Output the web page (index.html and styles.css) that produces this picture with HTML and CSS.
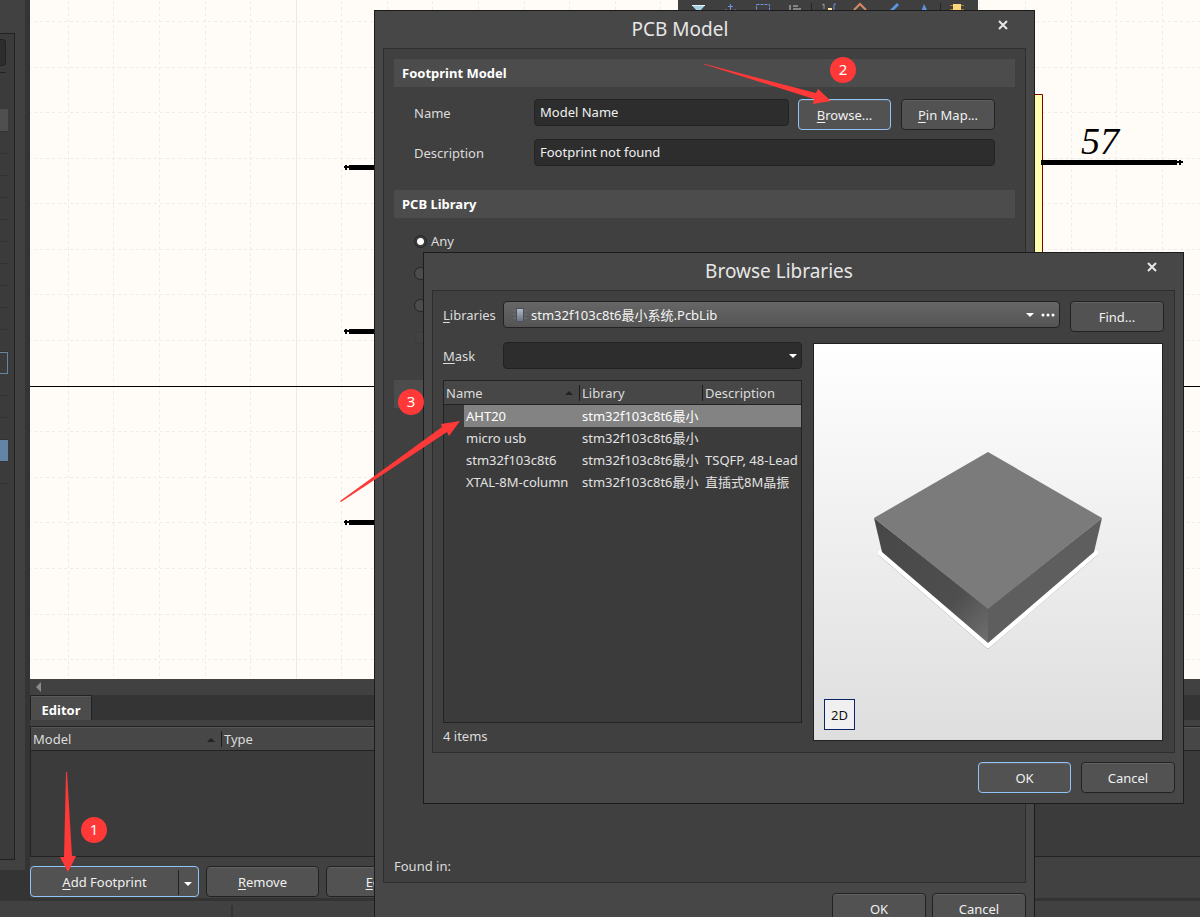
FILE: index.html
```html
<!DOCTYPE html>
<html lang="en">
<head>
<meta charset="utf-8">
<title>PCB Model</title>
<link rel="stylesheet" href="styles.css">
</head>
<body>
<div class="app">
  <div class="upper">
    <aside class="side">
      <div class="side-panel">
        <div class="side-field"></div>
        <div class="side-rule"></div>
        <div class="side-rows">
          <div class="side-row head"></div>
          <div class="side-row"></div><div class="side-row"></div><div class="side-row"></div>
          <div class="side-row"></div><div class="side-row"></div><div class="side-row"></div>
          <div class="side-row"></div><div class="side-row"></div><div class="side-row"></div>
          <div class="side-row"></div><div class="side-row outlined"></div><div class="side-row"></div>
          <div class="side-row"></div><div class="side-row"></div><div class="side-row selected"></div>
          <div class="side-row"></div>
        </div>
      </div>
    </aside>
    <main class="main">
      <section class="canvas" aria-label="Schematic">
        <svg class="sheet" aria-hidden="true">
          <g class="grid" transform="translate(-30 0)">
            <path d="M68.5 1V700M113.5 1V700M159.5 1V700M205.5 1V700M250.5 1V700M341.5 1V700M387.5 1V700M432.5 1V700M478.5 1V700M524.5 1V700M569.5 1V700M615.5 1V700M660.5 1V700M979.5 1V700M1025.5 1V700M1071.5 1V700M1116.5 1V700M1162.5 1V700"/>
            <path d="M28 21.5H4000M28 67.5H4000M28 112.5H4000M28 158.5H4000M28 203.5H4000M28 249.5H4000M28 294.5H4000M28 340.5H4000M28 431.5H4000M28 477.5H4000M28 522.5H4000M28 568.5H4000M28 614.5H4000M28 659.5H4000"/>
          </g>
          <g transform="translate(-30 0)">
            <path class="grid-major" d="M296.5 0V700"/>
            <path d="M30 386.5H4000" stroke="#000"/>
            <path d="M1030 94.500H1042.500V400H1030" fill="#ffffb0" stroke="#800000"/>
            <path d="M349 167.500H376M349 331.500H376M349 522.500H376M1041 162.500H1177" stroke="#000" stroke-width="5"/>
            <path d="M344 167H350M346 165V170M344 331H350M346 329V334M344 522H350M346 520V525M1176 162H1183M1180 160V165" stroke="#000" stroke-width="2"/>
            <text class="pin-number" x="1081" y="154">57</text>
          </g>
        </svg>
      </section>
      <div class="hscroll"><svg width="8" height="10" aria-hidden="true"><path d="M1 5L6 0V10Z" fill="#8c8c8c"/></svg></div>
      <div class="tabs"><button class="tab" type="button">Editor</button></div>
      <section class="models">
        <table class="model-table">
          <thead><tr><th class="col-model"><span>Model</span><i class="sort"></i></th><th><span class="split">Type</span></th></tr></thead>
        </table>
      </section>
      <div class="actions">
        <div class="split-button">
          <button type="button"><u>A</u>dd Footprint</button>
          <button type="button" class="more" aria-label="More footprint options"><i class="caret"></i></button>
        </div>
        <button class="btn wide" type="button"><u>R</u>emove</button>
        <button class="btn wide" type="button"><u>E</u>dit...</button>
      </div>
    </main>
  </div>
  <footer class="status"><span class="status-cell"></span></footer>
</div>

<div class="toolbar" aria-hidden="true">
  <svg width="300" height="24">
    <path d="M14 5.500H27L22 11V20H19V11Z" fill="#a5d0e2"/>
    <path d="M14 5.500H27" stroke="#e8f4f8"/>
    <path d="M52.500 4V20M50 6.500H55" stroke="#6f93dc"/>
    <path d="M47 9.500H49M56 9.500H58" stroke="#666"/>
    <path d="M78.500 4.500H91.500V18H78.500Z" fill="none" stroke="#6f93dc" stroke-dasharray="3 1"/>
    <path d="M112 5V20M115 6H120M115 9H123" stroke="#858585" stroke-width="2"/>
    <path d="M133.500 3V24M262.500 3V24" stroke="#252525"/>
    <path d="M144 5L146 4V9" fill="none" stroke="#9a9aaa"/>
    <path d="M150 9H154" stroke="#ffe0a0" stroke-width="2"/>
    <path d="M156 10V4H158" fill="none" stroke="#6f93dc" stroke-width="1"/>
    <path d="M176 10L182 4L188 10" fill="none" stroke="#d98a62" stroke-width="2"/>
    <path d="M213 11L220 4" stroke="#5b95e0" stroke-width="3"/>
    <path d="M243 12L246 4L250 12Z" fill="#5b95e0"/>
    <path d="M272 5.500H286M272 9.500H286" stroke="#a08030"/>
    <rect x="275" y="4" width="8" height="12" fill="#ffd67c"/>
  </svg>
</div>

<section class="dialog pcb" role="dialog" aria-label="PCB Model">
  <header class="dialog-title"><h1>PCB Model</h1>
    <button class="close" type="button" aria-label="Close"><svg width="10" height="10"><path d="M1 1L9 9M9 1L1 9"/></svg></button></header>
  <div class="dialog-body">
    <h2 class="group">Footprint Model</h2>
    <div class="form">
      <label for="name">Name</label>
      <div class="form-line">
        <input id="name" class="field" type="text" value="Model Name">
        <button class="btn primary" type="button"><u>B</u>rowse...</button>
        <button class="btn" type="button"><u>P</u>in Map...</button>
      </div>
      <label for="description">Description</label>
      <input id="description" class="field" type="text" value="Footprint not found">
    </div>
    <h2 class="group">PCB Library</h2>
    <div class="radios">
      <label><input type="radio" name="lib" checked>Any</label>
      <label><input type="radio" name="lib" aria-label="Library name"></label>
      <label><input type="radio" name="lib" aria-label="Library path"></label>
      <label><input type="radio" name="lib" aria-label="Integrated library" disabled></label>
    </div>
    <h2 class="group selected-group" aria-hidden="true"></h2>
    <p class="found">Found in:</p>
  </div>
  <footer class="dialog-actions">
    <button class="btn" type="button">OK</button>
    <button class="btn" type="button">Cancel</button>
  </footer>
</section>

<section class="dialog browse" role="dialog" aria-label="Browse Libraries">
  <header class="dialog-title"><h1>Browse Libraries</h1>
    <button class="close" type="button" aria-label="Close"><svg width="10" height="10"><path d="M1 1L9 9M9 1L1 9"/></svg></button></header>
  <div class="dialog-body">
    <div class="library-line">
      <label for="libraries"><u>L</u>ibraries</label>
      <div class="combo light">
        <svg class="chip" width="14" height="14" aria-hidden="true"><defs><linearGradient id="chip" x2="0" y2="1"><stop stop-color="#b4bcc8"/><stop offset="1" stop-color="#687080"/></linearGradient></defs><path d="M0 2.500H14M0 6.500H14M0 10.500H14" stroke="#6a7078"/><rect x="3.500" y=".5" width="7" height="13" fill="url(#chip)" stroke="#4c5058"/></svg>
        <select id="libraries"><option>stm32f103c8t6最小系统.PcbLib</option></select>
        <i class="caret"></i>
        <button class="dots" type="button" aria-label="Choose libraries"><svg width="14" height="4"><circle cx="2" cy="2" r="1.500"/><circle cx="7" cy="2" r="1.500"/><circle cx="12" cy="2" r="1.500"/></svg></button>
      </div>
      <button class="btn" type="button">Find...</button>
    </div>
    <div class="browse-columns">
      <div class="browse-list">
        <div class="mask-line">
          <label for="mask"><u>M</u>ask</label>
          <div class="combo dark"><input id="mask" type="text"><i class="caret"></i></div>
        </div>
        <div class="list">
          <table class="parts">
            <colgroup><col class="c-indent"><col class="c-name"><col class="c-lib"><col></colgroup>
            <thead><tr><th colspan="2"><div class="name-head">Name<i class="sort"></i></div></th><th><span class="split">Library</span></th><th><span class="split">Description</span></th></tr></thead>
            <tbody>
              <tr class="current"><td></td><td>AHT20</td><td>stm32f103c8t6最小</td><td></td></tr>
              <tr><td></td><td>micro usb</td><td>stm32f103c8t6最小</td><td></td></tr>
              <tr><td></td><td>stm32f103c8t6</td><td>stm32f103c8t6最小</td><td>TSQFP, 48-Lead</td></tr>
              <tr><td></td><td>XTAL-8M-column</td><td>stm32f103c8t6最小</td><td>直插式8M晶振</td></tr>
            </tbody>
          </table>
        </div>
        <p class="count">4 items</p>
      </div>
      <div class="preview">
        <svg class="model" viewBox="0 0 348 396" aria-hidden="true">
          <defs><linearGradient id="face" x1="60" y1="190" x2="174" y2="300" gradientUnits="userSpaceOnUse"><stop stop-color="#484848"/><stop offset=".65" stop-color="#4e4e4e"/><stop offset="1" stop-color="#707070"/></linearGradient></defs>
          <path d="M67 210L174 302L281 210" fill="none" stroke="#a9b4c2" stroke-width="5" stroke-linejoin="round" stroke-linecap="round"/>
          <path d="M67 209L174 301L281 209" fill="none" stroke="#fff" stroke-width="6" stroke-linejoin="round" stroke-linecap="round"/>
          <path d="M60 174L174 264V299L68 208Z" fill="url(#face)"/>
          <path d="M288 174L174 264V299L280 208Z" fill="#5e5e5e"/>
          <path d="M174 108L288 174L174 265L60 174Z" fill="#7b7b7b"/>
        </svg>
        <button class="view-mode" type="button">2D</button>
      </div>
    </div>
  </div>
  <footer class="dialog-actions">
    <button class="btn primary" type="button">OK</button>
    <button class="btn" type="button">Cancel</button>
  </footer>
</section>

<svg class="arrows" aria-hidden="true">
  <path d="M66 772H67L72 856H76L68 872L60 857H64Z"/>
  <path d="M703 64H705L816 93L818 89L831 101L813 104L814 99Z"/>
  <path d="M340 501L442 427L441 424L460 421L449 436L447 432L341 502Z"/>
</svg>
<span class="step one">1</span>
<span class="step two">2</span>
<span class="step three">3</span>
</body>
</html>
```
FILE: styles.css
```css
* { box-sizing: border-box; }
body, input, select, button {
  font-family: "Noto Sans", "Noto Sans CJK SC", sans-serif;
  font-size: 13px;
  line-height: 18px;
  color: #dcdcdc;
}
body { margin: 0; background: #343434; overflow: hidden; }
button, input, select { margin: 0; padding: 0; border: 0; background: none; }
h1, h2, p { margin: 0; }
u { text-underline-offset: 2px; }

.app { display: flex; flex-direction: column; height: 100vh; }
.upper { flex: 1; display: flex; min-height: 0; }
.side { width: 25px; margin: 0 5px 31px 0; padding: 33px 10px 10px 0; background: #414141; flex: none; }
.side-panel { height: 100%; background: #3b3b3b; border: solid #222; border-width: 1px 1px 1px 0; padding: 5px 6px 0 0; }
.side-field { height: 27px; background: #2d2d2d; border: 1px solid #222; border-left: 0; border-radius: 0 4px 4px 0; margin-right: 2px; }
.side-rule { height: 7px; border-bottom: 1px solid #222; margin-right: 2px; }
.side-rows { padding-top: 36px; }
.side-row { height: 22px; border-bottom: 1px solid #333; }
.side-row.head { background: #4f4f4f; height: 23px; }
.side-row.outlined { border: 1px solid #6384a4; border-left: 0; }
.side-row.selected { background: #6384a4; }

.main { flex: 1; min-width: 0; display: flex; flex-direction: column; background: #414141; }
.canvas { flex: 1; min-height: 0; background: #fffcf7; }
.sheet { display: block; width: 100%; height: 100%; }
.grid { stroke: #eeece8; stroke-dasharray: 3 3; fill: none; }
.grid-major { stroke: #e9e9e6; }
.pin-number { font: italic 38px "Liberation Serif", serif; }
.hscroll { height: 16px; padding: 3px 5px; line-height: 0; }
.tabs { height: 25px; background: #343434; display: flex; }
.tab { border: solid #222; border-width: 1px 1px 0; width: 62px; background: #4c4c4c; box-shadow: inset 0 1px #5a5a5a; color: #fff; font-weight: 700; padding-top: 4px; }
.models { margin-top: 6px; height: 131px; background: #3b3b3b; border: 1px solid #222; border-right: 0; }
table { border-collapse: separate; border-spacing: 0; table-layout: fixed; width: 100%; }
th { font-weight: 400; text-align: left; padding: 0; white-space: nowrap; }
.model-table th { height: 24px; background: #474747; border-bottom: 1px solid #222; box-shadow: inset 0 1px #555; padding-left: 2px; }
.model-table .col-model { width: 190px; }
.col-model span { display: inline-block; width: 174px; }
.model-table th:last-child { padding-left: 0; }
.split { display: block; border-left: 1px solid #1c1c1c; padding-left: 2px; line-height: 16px; }
.sort { display: inline-block; border: 4px solid transparent; border-top: 0; border-bottom-color: #222; vertical-align: middle; }
.actions { display: flex; gap: 7px; padding: 9px 0 1px; border-bottom: 3px solid #343434; }
.btn { width: 94px; height: 31px; flex: none; background: #525252; border: 1px solid #222; border-radius: 4px; box-shadow: inset 0 1px #616161; }
.btn.wide { width: 113px; }
.btn.primary, .split-button { border: 1px solid #90c4f8; }
.btn.primary { width: 93px; }
.btn, .split-button button { color: #f0f0f0; }
.split-button { display: flex; width: 169px; height: 31px; border-radius: 4px; background: #525252; }
.split-button button { flex: 1; }
.split-button .more { flex: none; width: 20px; margin: 3px 0 1px; border-left: 1px solid #222; padding: 0 2px 4px 0; }
.caret { display: inline-block; border: 4px solid transparent; border-top-color: #fff; border-bottom: 0; flex: none; }
.status { height: 16px; background: #414141; padding: 4px 0 0 231px; }
.status-cell { display: block; height: 12px; border-left: 2px solid #343434; }

.toolbar { position: absolute; left: 678px; top: 0; background: #3f3f3f; height: 24px; width: 300px; }

.dialog { position: absolute; display: flex; flex-direction: column; background: #474747; border: 1px solid #1c1c1c; padding: 0 8px; }
.pcb { left: 374px; top: 10px; width: 661px; height: 940px; }
.browse { left: 423px; top: 252px; width: 761px; height: 552px; }
.dialog-title { height: 37px; flex: none; display: flex; justify-content: center; position: relative; padding-right: 49px; }
h1 { font-size: 19px; line-height: 36px; font-weight: 400; color: #e6e6e6; }
.close { position: absolute; right: 17px; top: 8px; width: 12px; height: 12px; line-height: 0; }
.close path { stroke: #e8e8e8; stroke-width: 2; }
.dialog-body { background: #404040; border: 1px solid #2e2e2e; padding: 10px; }
.pcb .dialog-body { height: 835px; display: flex; flex-direction: column; }
.group { height: 28px; flex: none; background: #4c4c4c; padding: 0 8px; font-size: 13px; line-height: 28px; font-weight: 700; color: #fff; }
.form { display: grid; grid-template-columns: 120px 1fr; padding: 12px 20px 22px; row-gap: 9px; }
.form label { line-height: 29px; }
.form-line { display: flex; gap: 9px; align-items: flex-start; }
.form-line .btn + .btn { margin-left: 1px; }
.field { background: #2d2d2d; border: 1px solid #222; border-radius: 4px; height: 27px; padding: 0 5px 2px; width: 100%; min-width: 0; color: #f0f0f0; }
.radios { display: grid; row-gap: 14px; padding: 14px 20px 0; }
.radios label { display: flex; align-items: center; gap: 4px; height: 18px; }
.radios input { appearance: none; width: 13px; height: 13px; border-radius: 50%; border: 1px solid #252525; background: #4c4c4c; margin: 0; }
.radios input:checked { background: radial-gradient(circle, #fff 3px, #3c3c3c 4px); }
.radios input:disabled { opacity: .2; }
.selected-group { margin-top: 34px; }
.found { margin-top: auto; line-height: 12px; }
.dialog-actions { display: flex; justify-content: flex-end; gap: 6px; padding-top: 10px; }

.browse .dialog-body { height: 463px; }
.library-line, .mask-line { display: flex; }
.library-line label, .mask-line label { width: 60px; flex: none; line-height: 28px; }
.library-line .btn { margin-left: 10px; }
.combo { flex: 1; min-width: 0; height: 27px; display: flex; align-items: center; border: 1px solid #222; border-radius: 4px; padding: 0 4px 0 9px; }
.combo.light { background: linear-gradient(#666, #545454); }
.combo.dark { background: #2d2d2d; }
.combo select { appearance: none; flex: 1; min-width: 0; padding-left: 4px; color: #f4f4f4; }
.combo input { flex: 1; min-width: 0; }
.dots { margin-left: 7px; line-height: 0; fill: #fff; }
.browse-columns { display: grid; grid-template-columns: minmax(0, 359px) minmax(0, 1fr); column-gap: 11px; margin-top: 10px; }
.mask-line { margin-bottom: 11px; }
.mask-line label { height: 27px; }
.list { height: 343px; background: #3b3b3b; border: 1px solid #222; overflow: hidden; }
.parts th { height: 24px; background: #474747; border-bottom: 1px solid #222; }
.parts td { height: 22px; padding: 0; line-height: 22px; white-space: nowrap; overflow: hidden; color: #e2e2e2; }
.parts td:nth-child(2) { padding-left: 2px; }
.parts td:nth-child(3) { padding-left: 3px; }
.parts td:nth-child(4) { padding-left: 3px; }
.name-head { display: flex; align-items: center; justify-content: space-between; padding: 0 6px 0 2px; }
.c-indent { width: 20px; }
.c-name { width: 115px; }
.c-lib { width: 123px; }
.current td + td { background: #838383; color: #fff; }
.count { padding-top: 4px; }
.preview { align-self: start; height: 398px; margin: 1px 1px 0 0; background: linear-gradient(#fff, #dedede); border: 1px solid #222; position: relative; }
.model { display: block; width: 100%; height: 100%; }
.view-mode { position: absolute; left: 10px; bottom: 10px; width: 31px; height: 31px; border: 1px solid #0a246a; background: #f0f0f0; color: #111; }
.browse .dialog-actions { padding-top: 9px; gap: 10px; }

.arrows { position: absolute; left: 0; top: 0; width: 100%; height: 100%; fill: #ff3838; pointer-events: none; }
.step { position: absolute; width: 26px; height: 26px; border-radius: 50%; background: #ff3838; color: #fff; font-size: 15px; line-height: 24px; text-align: center; }
.one { left: 81px; top: 817px; }
.two { left: 830px; top: 57px; }
.three { left: 398px; top: 389px; }
```
